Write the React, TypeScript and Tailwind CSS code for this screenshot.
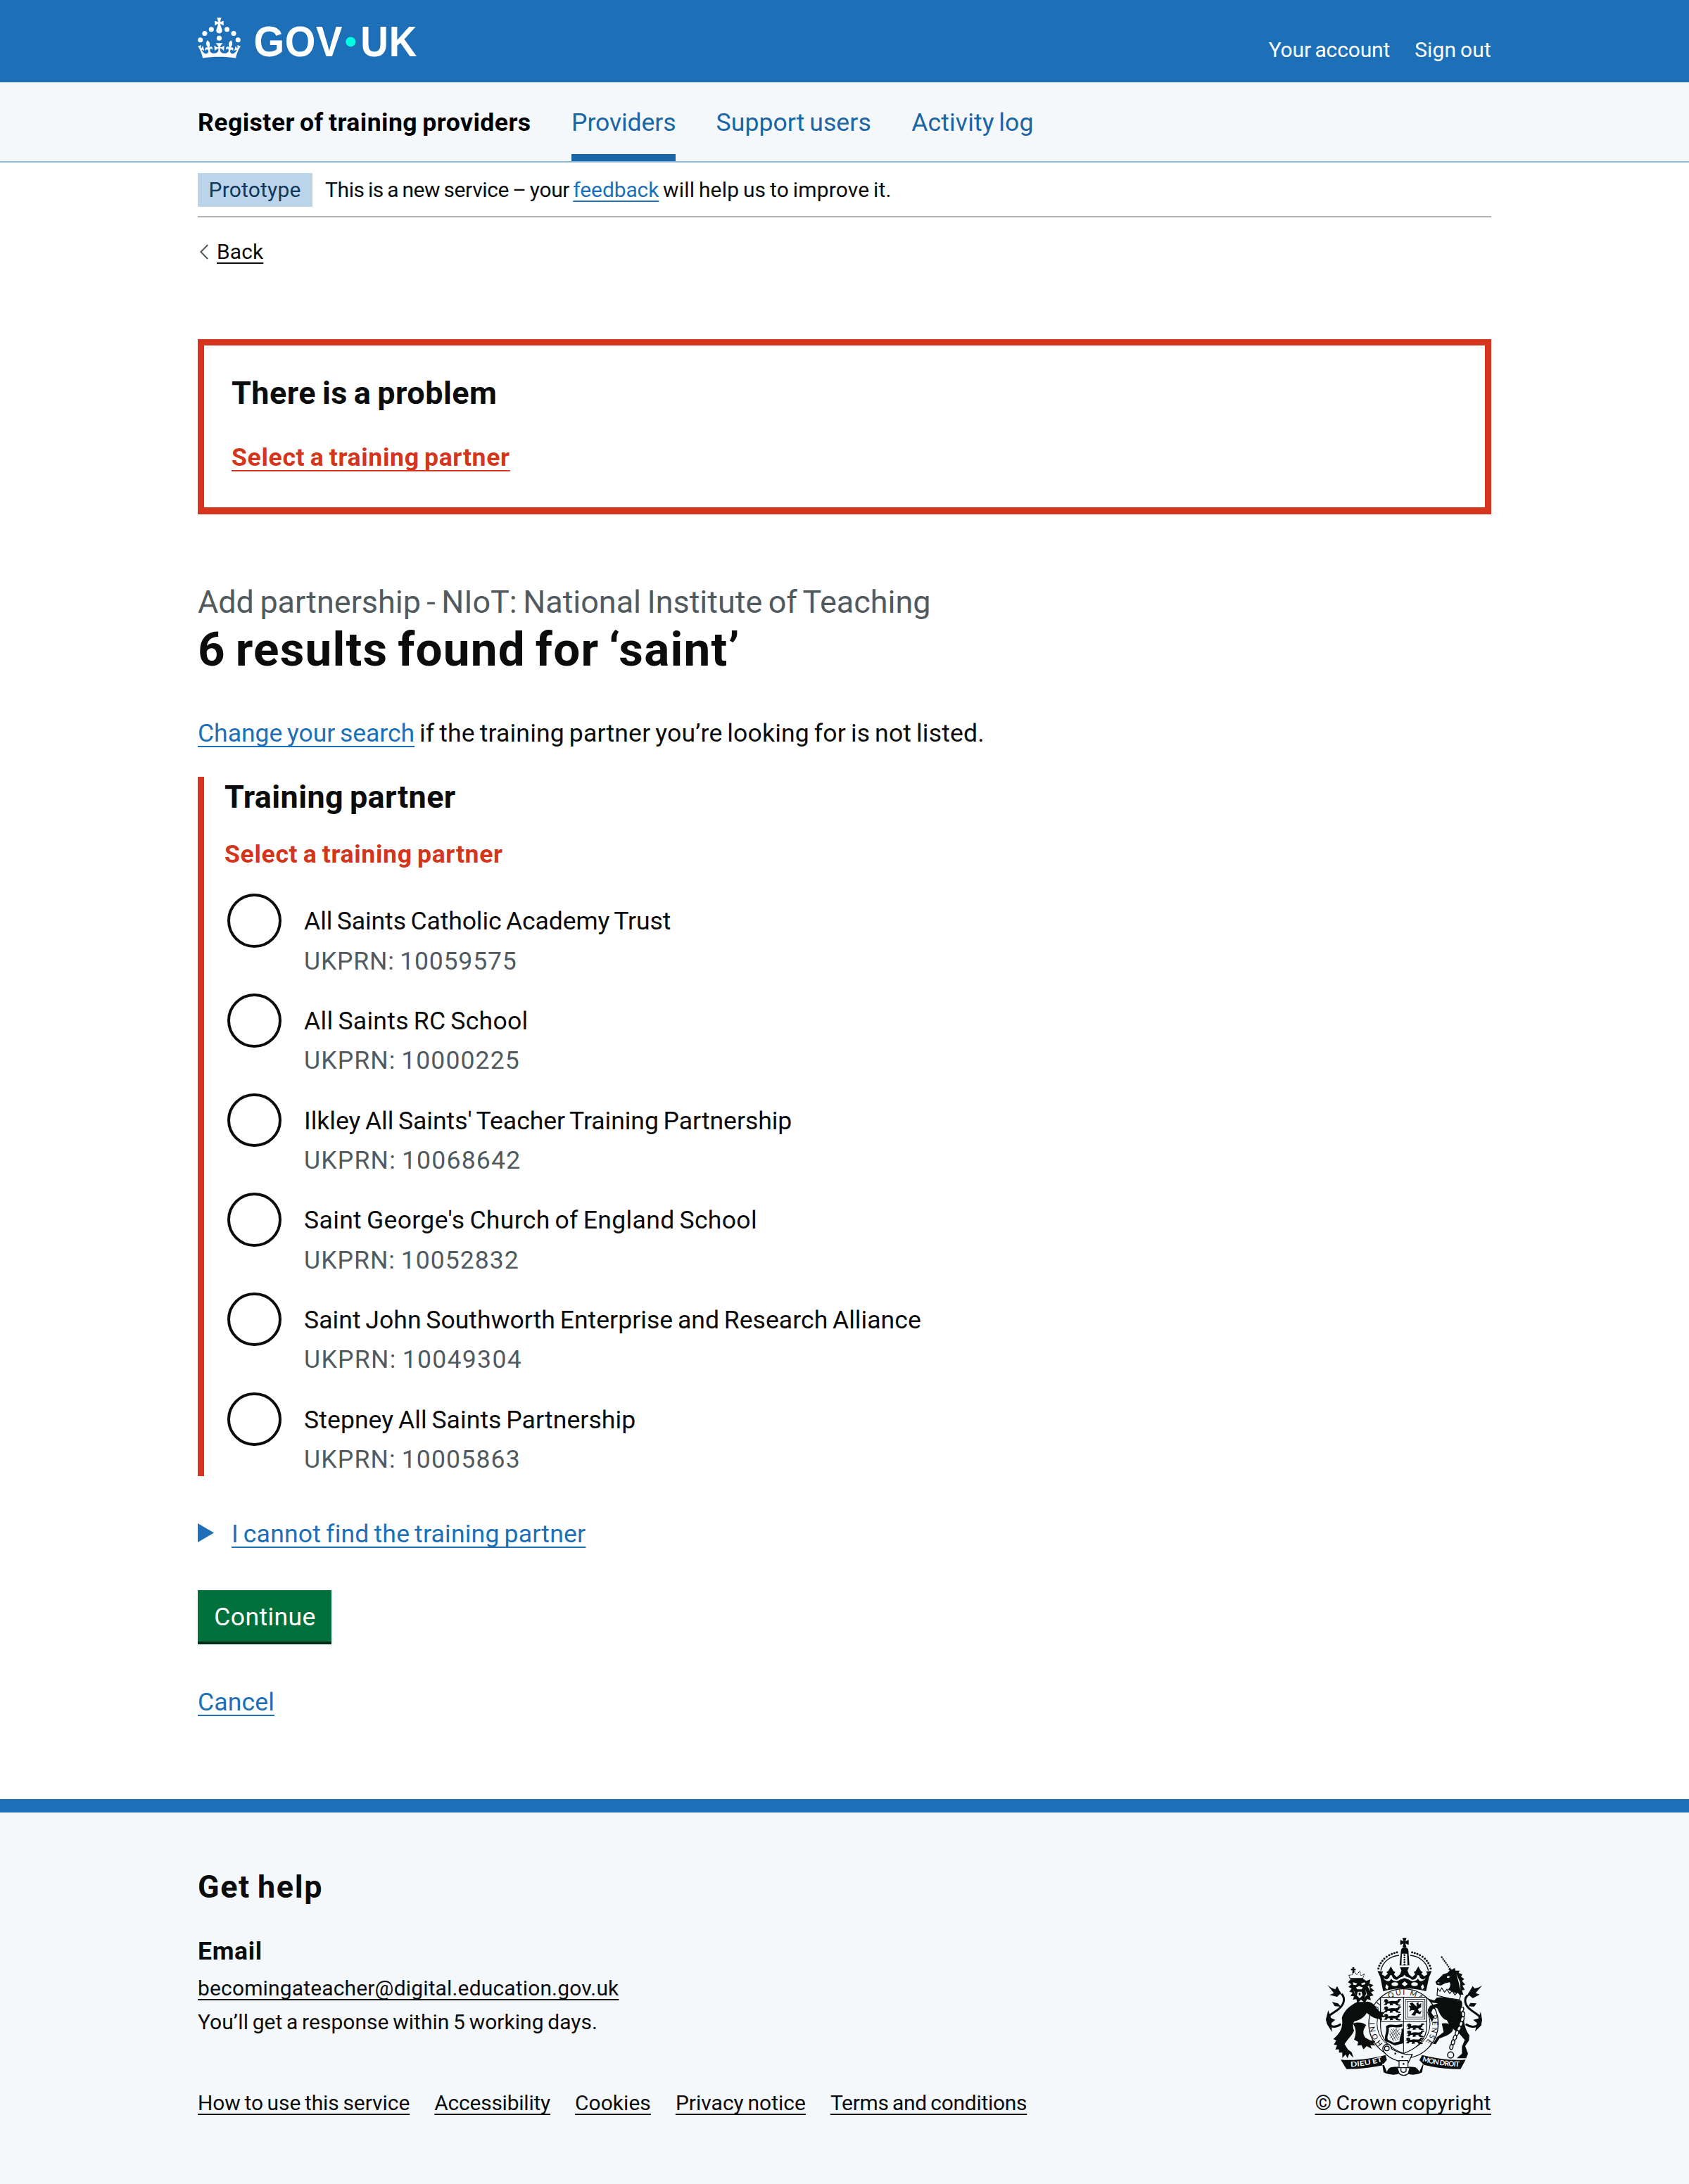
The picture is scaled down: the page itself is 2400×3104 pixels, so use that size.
import React from 'react';

const INK = '#0b0c0c';
const PAPER = '#f4f8fb';

const providers = [
  { name: 'All Saints Catholic Academy Trust', nameTracking: 'tracking-[-0.003em]', ukprn: '10059575', ukprnTracking: 'tracking-[0.023em]' },
  { name: 'All Saints RC School', nameTracking: 'tracking-[0.008em]', ukprn: '10000225', ukprnTracking: 'tracking-[0.031em]' },
  { name: "Ilkley All Saints' Teacher Training Partnership", nameTracking: 'tracking-[-0.001em]', ukprn: '10068642', ukprnTracking: 'tracking-[0.034em]' },
  { name: "Saint George's Church of England School", nameTracking: 'tracking-[0.009em]', ukprn: '10052832', ukprnTracking: 'tracking-[0.029em]' },
  { name: 'Saint John Southworth Enterprise and Research Alliance', nameTracking: 'tracking-[0.001em]', ukprn: '10049304', ukprnTracking: 'tracking-[0.037em]' },
  { name: 'Stepney All Saints Partnership', nameTracking: 'tracking-[0.002em]', ukprn: '10005863', ukprnTracking: 'tracking-[0.033em]' },
];

const footerLinks = [
  { label: 'How to use this service', tracking: 'tracking-[-0.001em]' },
  { label: 'Accessibility', tracking: 'tracking-[-0.007em]' },
  { label: 'Cookies', tracking: 'tracking-[0.002em]' },
  { label: 'Privacy notice', tracking: 'tracking-[0.001em]' },
  { label: 'Terms and conditions', tracking: 'tracking-[-0.009em]' },
];

const small = 'text-[29.95px] leading-[39px] ';
const body = 'text-[35.56px] leading-[48px] ';
const medium = 'text-[44.92px] leading-[57px] ';
const smallLink = 'underline decoration-2 underline-offset-[5px] [text-decoration-skip-ink:none] ';
const bodyLink = 'underline decoration-2 underline-offset-[6px] [text-decoration-skip-ink:none] ';
const container = 'mx-auto w-[1838px] ';

function Logo() {
  return (
    <svg viewBox="0 0 324 60" className="block h-[57.4px] w-[310.2px] overflow-visible" fill="#ffffff" role="img" aria-label="GOV.UK">
      <circle cx="20" cy="17.6" r="3.7" />
      <circle cx="10.2" cy="23.5" r="3.7" />
      <circle cx="3.7" cy="33.2" r="3.7" />
      <circle cx="31.7" cy="30.6" r="3.7" />
      <circle cx="43.3" cy="17.6" r="3.7" />
      <circle cx="53.2" cy="23.5" r="3.7" />
      <circle cx="59.7" cy="33.2" r="3.7" />
      <path d="M33.1,9.8c.2-.1.3-.3.5-.5l4.6,2.4v-6.8l-4.6,1.5c-.1-.2-.3-.3-.5-.5l1.9-5.9h-6.7l1.9,5.9c-.2.1-.3.3-.5.5l-4.6-1.5v6.8l4.6-2.4c.1.2.3.3.5.5l-2.6,8c-.9,2.8,1.2,5.7,4.1,5.7h0c3,0,5.1-2.9,4.1-5.7l-2.6-8ZM37,37.9s-3.4,3.8-4.1,6.1c2.2,0,4.2-.5,6.4-2.8l-.7,8.5c-2-2.8-4.4-4.1-5.7-3.8.1,3.1.5,6.7,5.8,7.2,3.7.3,6.7-1.5,7-3.8.4-2.6-2-4.3-3.7-1.6-1.4-4.5,2.4-6.1,4.9-3.2-1.9-4.5-1.8-7.7,2.4-10.9,3,4,2.6,7.3-1.2,11.1,2.4-1.3,6.2,0,4,4.6-1.2-2.8-3.7-2.2-4.2.2-.3,1.7.7,3.7,3,4.2,1.9.3,4.7-.9,7-5.9-1.3,0-2.4.7-3.9,1.7l2.4-8c.6,2.3,1.4,3.7,2.2,4.5.6-1.6.5-2.8,0-5.3l5,1.8c-2.6,3.6-5.2,8.7-7.3,17.5-7.4-1.1-15.7-1.7-24.5-1.7h0c-8.8,0-17.1.6-24.5,1.7-2.1-8.9-4.7-13.9-7.3-17.5l5-1.8c-.5,2.5-.6,3.7,0,5.3.8-.8,1.6-2.3,2.2-4.5l2.4,8c-1.5-1-2.6-1.7-3.9-1.7,2.3,5,5.2,6.2,7,5.9,2.3-.4,3.3-2.4,3-4.2-.5-2.4-3-3.1-4.2-.2-2.2-4.6,1.6-6,4-4.6-3.7-3.7-4.2-7.1-1.2-11.1,4.2,3.2,4.3,6.4,2.4,10.9,2.5-2.8,6.3-1.3,4.9,3.2-1.8-2.7-4.1-1-3.7,1.6.3,2.3,3.3,4.1,7,3.8,5.4-.5,5.7-4.2,5.8-7.2-1.3-.2-3.7,1-5.7,3.8l-.7-8.5c2.2,2.3,4.2,2.7,6.4,2.8-.7-2.3-4.1-6.1-4.1-6.1h10.6,0Z" />
      <g fontFamily="Liberation Sans, sans-serif" fontWeight="700" fontSize="63.8">
        <text transform="scale(.92 1)" x="90.1 140.4 190.7" y="57.8">GOV</text>
        <text transform="scale(.9 1)" x="268.4 315.4" y="57.8">UK</text>
      </g>
      <circle cx="227" cy="36" r="7.3" fill="#00ffe0" />
    </svg>
  );
}

/* One walking lion of the quarterings, about 74 by 28 units. */
function PassantLion({ x, y }: { x: number; y: number }) {
  return (
    <path
      transform={`translate(${x} ${y})`}
      d="M2 4 L12 0 L20 5 L19 11 L34 8 L52 9 L60 7 L64 0 L74 1 L76 6 L69 6 L67 14 L60 18 L64 23 L74 25 L70 29 L55 27 L49 20 L37 20 L42 26 L26 28 L28 20 L18 19 L12 26 L0 25 L8 18 L6 13 L-2 14 L4 9 Z"
    />
  );
}

function Crest() {
  const pearls = [
    [296, 203], [300, 191], [306, 180], [313, 170], [321, 161], [331, 153], [342, 146], [353, 141], [364, 137], [375, 134],
  ];
  const links = [
    [652, 378, 20], [657, 398, -5], [654, 419, 15], [648, 439, 20], [640, 459, 25], [631, 478, 20], [622, 498, 20], [614, 518, 15], [607, 538, 10],
  ];
  return (
    <svg viewBox="66 66 680 600" className="mr-[10px] block h-[200px] w-[226.7px]" fill={INK} role="img" aria-label="Royal coat of arms">
      {/* crown: cross, orb and arches */}
      <path d="M398 73 H416 L411 87 L425 81 V103 L411 97 L415 111 H399 L403 97 L389 103 V81 L403 87 Z" />
      <path d="M392 128 A16 17 0 1 1 424 128 L428 190 H386 Z" />
      <path d="M396 140 L394 188 H420 L418 140 Z" fill={PAPER} />
      {[146, 156, 166, 176, 186].map((y) => <circle key={y} cx="407" cy={y} r="4" />)}
      {pearls.map(([x, y]) => (
        <g key={x}>
          <circle cx={x} cy={y} r="4.6" />
          <circle cx={815 - x} cy={y} r="4.6" />
        </g>
      ))}
      <path d="M306 212 C316 170 350 150 384 147" fill="none" stroke={INK} strokeWidth="4" />
      <path d="M509 212 C499 170 465 150 431 147" fill="none" stroke={INK} strokeWidth="4" />
      {/* crown: rim with crosses and lilies */}
      <path d="M292 214 L316 216 L310 228 L324 236 L336 226 L330 218 L338 214 L349 194 L360 214 L368 218 L362 228 L374 240 L388 228 L394 212 L388 198 H426 L420 212 L426 228 L440 240 L453 228 L447 218 L455 214 L466 194 L477 214 L485 218 L479 226 L491 236 L505 228 L499 216 L523 214 L512 240 L499 300 C440 284 375 284 316 300 L304 240 Z" />
      <g fill={PAPER}>
        <path d="M318 242 C330 258 342 246 346 232 L353 232 C357 250 376 258 384 244 L400 238 L407 230 L414 238 L431 244 C439 258 458 250 462 232 L469 232 C473 246 485 258 497 242 L494 250 C480 262 468 258 465 246 C456 260 438 260 428 251 L407 244 L387 251 C377 260 359 260 350 246 C347 258 335 262 321 250 Z" />
        <path d="M330 270 l9 10 -5 13 -9 -9Z M486 270 l-9 10 5 13 9 -9Z M408 258 l13 11 -13 11 -13 -11Z" />
        <ellipse cx="366" cy="270" rx="14" ry="8" />
        <ellipse cx="450" cy="270" rx="14" ry="8" />
      </g>

      {/* garter with its motto */}
      <circle cx="403" cy="438" r="148" fill={PAPER} stroke={INK} strokeWidth="4" />
      <circle cx="403" cy="438" r="113" fill="none" stroke={INK} strokeWidth="3" />
      <defs>
        <path id="garter" d="M315 524 A123 123 0 1 1 488 527" />
      </defs>
      <text fontFamily="Lato, sans-serif" fontSize="31" fontWeight="400">
        <textPath href="#garter" textLength="566">HONI SOIT QUI MAL Y PENSE</textPath>
      </text>

      {/* shield */}
      <path d="M305 326 H502 V450 C502 505 460 545 403 565 C346 545 305 505 305 450 Z" fill={PAPER} stroke={INK} strokeWidth="3.5" />
      <path d="M403 326 V562 M305 430 H502" stroke={INK} strokeWidth="3" />
      <PassantLion x={318} y={333} />
      <PassantLion x={318} y={364} />
      <PassantLion x={318} y={396} />
      <PassantLion x={416} y={437} />
      <PassantLion x={416} y={467} />
      <PassantLion x={412} y={497} />
      <rect x="411" y="335" width="83" height="84" fill="none" stroke={INK} strokeWidth="2.5" />
      <rect x="419" y="343" width="67" height="68" fill="none" stroke={INK} strokeWidth="2" />
      <path d="M429 352 L441 348 L450 358 L460 366 L458 352 L466 346 L468 358 L478 350 L478 368 L464 376 L470 388 L480 384 L474 398 L458 392 L452 404 L436 402 L444 392 L450 382 L438 380 L428 386 L432 372 L424 362 L436 362 Z" />
      <path d="M328 450 C345 434 372 452 398 438 L398 451 C372 460 356 448 340 456 C344 480 330 490 336 506 L362 520 L386 514 C386 492 398 478 394 462 L402 458 V522 L366 532 L326 512 C318 494 334 474 328 450 Z" />
      <path d="M346 468 L372 512 M352 462 L380 508 M360 460 L384 500 M370 460 L386 486 M344 482 L362 514 M386 462 L346 500 M390 474 L354 508 M376 458 L344 488" stroke={INK} strokeWidth="2" />

      {/* lion */}
      <path d="M170 232 L178 256 H226 L236 226 L222 234 L216 214 L204 230 L190 210 L184 230 Z" fill={PAPER} stroke={INK} strokeWidth="3" strokeDasharray="5 2" />
      <path d="M185 198 h8 v6 h6 v7 h-6 v12 h-8 v-12 h-6 v-7 h6Z M176 244 H230 V250 H176Z" />
      <path d="M178 250 L166 262 L180 270 L168 282 L182 288 L172 302 L186 306 L177 320 L192 322 L187 336 L202 334 L206 352 L222 336 L238 350 L248 334 L264 338 L260 322 L275 318 L264 304 L279 298 L262 284 L275 274 L258 268 L262 250 L244 256 L232 248 Z" />
      <path d="M188 262 L206 268 L200 274 L188 272Z M238 262 L222 268 L226 274 L240 270Z M200 284 L214 278 L230 284 L224 292 H206Z M208 302 H224 L228 318 L216 330 L204 318Z M190 296 L198 318 L194 302Z M240 292 L248 316 L236 326 L244 312Z M256 276 L262 300 L250 280Z" fill={PAPER} />
      <path d="M212 306 h8 v12 h-8Z" />
      <path d="M206 346 C172 362 148 386 140 414 C146 444 138 468 120 488 L104 504 L116 510 L106 528 L120 530 L112 548 L128 548 L128 562 L142 562 L142 584 L156 570 L164 586 L172 566 L190 584 L182 560 L166 548 L152 526 C166 502 186 486 192 468 C186 450 186 440 194 428 C218 424 238 408 246 392 C262 404 276 416 296 418 L312 426 L310 412 L324 410 L314 400 L324 390 L302 388 L288 372 C276 352 256 340 240 346 Z" />
      <path d="M188 438 C212 428 234 436 244 444 C232 462 226 478 240 498 L262 510 L284 512 L274 522 L284 532 L262 530 L268 546 L246 534 L232 548 L224 530 L206 532 L210 516 L192 506 C202 482 202 462 188 438 Z" />
      <path d="M136 440 C106 462 80 448 78 424 C78 402 104 394 124 378 C150 358 156 332 140 312" fill="none" stroke={INK} strokeWidth="9" />
      <path d="M79 274 L96 286 L112 292 L120 278 L130 298 L146 322 L132 312 L120 324 L88 316 L106 308 Z M82 382 L94 414 L112 422 L96 436 L98 474 L78 442 L72 420 Z M124 352 L98 346 L110 364 L136 366Z" />

      {/* unicorn */}
      <path d="M564 152 L604 208" stroke={INK} strokeWidth="6" strokeDasharray="7 3" />
      <path d="M600 212 L592 204 L610 208 L622 200 L624 212 L642 212 L638 222 L654 228 L648 238 L662 248 L652 256 L666 272 L654 276 L664 294 L652 296 L658 314 L640 316 C624 306 606 300 592 294 C604 282 604 272 600 262 L580 266 L562 276 L544 272 L539 260 L556 244 L572 228 L590 222 Z" />
      <path d="M590 234 l12 4 -6 6 -8 -2Z M628 226 L644 262 L646 296 L638 262Z M548 262 l12 2 -10 3Z" fill={PAPER} />
      <path d="M548 288 L558 300 L566 286 L578 304 L588 292 L600 310 L610 298 L622 316 L634 304 L646 318 L642 336 L596 330 L546 318 Z" fill={PAPER} stroke={INK} strokeWidth="3.5" />
      <path d="M544 328 C572 320 612 334 648 340 C662 356 642 376 650 400 C668 424 656 450 684 488 L682 510 L666 534 L678 566 L670 586 H630 L652 566 L652 536 L664 508 L640 480 C622 468 600 452 588 424 C570 420 556 396 548 374 C536 364 524 376 522 392 L534 410 L524 432 L512 406 L506 380 L516 362 L550 352 L520 348 L504 330 L534 340 Z" />
      <path d="M566 438 C588 434 604 440 610 450 C622 466 606 480 586 490 L556 502 L540 526 L528 524 L546 496 L574 474 Z" />
      <path d="M668 440 C700 462 730 448 732 424 C732 402 706 394 688 378 C662 358 660 332 676 318" fill="none" stroke={INK} strokeWidth="9" />
      <path d="M738 276 L722 284 L706 288 L698 278 L686 298 L668 328 L684 318 L698 330 L728 314 L710 308 Z M732 388 L722 416 L700 422 L716 436 L708 472 L734 446 L738 422 Z M688 350 L714 352 L704 366 L680 364Z" />
      {links.map(([x, y, a]) => (
        <ellipse key={y} cx={x} cy={y} rx="7" ry="11" transform={`rotate(${a} ${x} ${y})`} fill={PAPER} stroke={INK} strokeWidth="4" />
      ))}
      <circle cx="604" cy="572" r="13" fill={PAPER} stroke={INK} strokeWidth="4.5" />

      {/* buckle of the garter */}
      <path d="M322 530 C340 520 352 532 352 546 C380 562 412 572 440 570 L424 604 C386 604 344 588 322 562 C312 550 312 538 322 530 Z" fill={PAPER} stroke={INK} strokeWidth="4" />
      <circle cx="332" cy="544" r="10" fill={PAPER} stroke={INK} strokeWidth="4" />
      <circle cx="368" cy="566" r="4" />
      <circle cx="398" cy="580" r="4" />

      {/* ribbon */}
      <path d="M135 592 C200 598 270 586 326 572 L336 606 L312 610 L318 646 C340 658 368 658 384 652 L380 622 L340 624 L330 612 C280 624 226 632 160 632 Z" />
      <path d="M668 592 C604 598 540 586 482 572 L466 604 L488 612 L482 646 C462 658 436 658 420 652 L424 622 L462 624 L474 610 C524 624 582 632 646 632 Z" />
      <path d="M318 610 L332 644 C340 620 364 620 376 622 L372 596 L334 590Z M486 610 L470 644 C462 620 438 620 428 622 L432 600 L462 586Z" fill={PAPER} />
      <path d="M384 596 H422 V626 H384Z" fill={PAPER} stroke={INK} strokeWidth="3.5" />
      <circle cx="403" cy="610" r="4" />
      <path d="M376 626 H430 L424 650 C412 662 394 662 384 650 Z" fill={PAPER} stroke={INK} strokeWidth="4" />
      <path d="M392 628 V640 C396 648 410 648 414 640 V628" fill="none" stroke={INK} strokeWidth="4" />
      <defs>
        <path id="ribbon-left" d="M178 622 C226 620 272 612 320 598" />
        <path id="ribbon-right" d="M482 598 C530 612 580 620 646 622" />
      </defs>
      <g fontFamily="Lato, sans-serif" fontSize="30" fontWeight="700" fill={PAPER}>
        <text><textPath href="#ribbon-left" textLength="138" lengthAdjust="spacingAndGlyphs">DIEU ET</textPath></text>
        <text><textPath href="#ribbon-right" textLength="162">MON DROIT</textPath></text>
      </g>
    </svg>
  );
}

function Header() {
  return (
    <header>
      <div className="h-[117px] bg-[#1d70b8]">
        <div className={container + 'flex items-start justify-between'}>
          <div className="pt-[25px]"><Logo /></div>
          <nav className={small + 'flex gap-[35px] pt-[51px] text-white'}>
            <a className="tracking-[-0.004em]">Your account</a>
            <a className="tracking-[0.006em]">Sign out</a>
          </nav>
        </div>
      </div>
      <div className="h-[114px] border-b-2 border-[#8eb8dc] bg-[#f4f8fb]">
        <div className={container + body + 'flex h-[112px] items-stretch gap-[57.5px]'}>
          <div className="pt-[33px] font-bold tracking-[0.013em] text-black">Register of training providers</div>
          <nav className="flex gap-[57.5px] text-[#1a65a6]">
            <a className="w-[148px] whitespace-nowrap border-b-10 border-[#1a65a6] pt-[33px] tracking-[-0.003em]">Providers</a>
            <a className="pt-[33px] tracking-[0.002em]">Support users</a>
            <a className="pt-[33px] tracking-[0.003em]">Activity log</a>
          </nav>
        </div>
      </div>
    </header>
  );
}

function PhaseBanner() {
  return (
    <div className={small + 'flex h-[78px] items-start border-b-2 border-[#b1b4b6] pt-[15px]'}>
      <strong className="mr-[18px] h-[48px] w-[163px] bg-[#bbd4ea] pl-[15.5px] pt-[4px] font-normal tracking-[0.008em] text-[#0f385c]">Prototype</strong>
      <span className="whitespace-nowrap pt-[4px]">
        <span className="tracking-[-0.012em]">This is a new service – your </span>
        <a className={smallLink + 'tracking-[-0.003em] text-[#1d70b8]'}>feedback</a>
        <span className="tracking-[0.006em]"> will help us to improve it.</span>
      </span>
    </div>
  );
}

function BackLink() {
  return (
    <div className={small + 'flex items-start pt-[29px]'}>
      <svg viewBox="0 0 12 22" className="ml-[3px] mr-[12px] mt-[9px] h-[22px] w-[12px]" fill="none" stroke="#505a5f" strokeWidth="2">
        <path d="M11.2 1 L1.4 11 L11.2 21" />
      </svg>
      <a className={smallLink + 'tracking-[0.004em]'}>Back</a>
    </div>
  );
}

function ErrorSummary() {
  return (
    <section className="mt-[105px] h-[249px] border-9 border-b-10 border-[#d4351c] px-[39px] pt-[39px]">
      <h2 className={medium + 'font-bold tracking-[0.011em]'}>There is a problem</h2>
      <a className={body + bodyLink + 'mt-[39px] inline-block font-bold tracking-[0.019em] text-[#d4351c]'}>Select a training partner</a>
    </section>
  );
}

function PartnerRadios() {
  return (
    <fieldset className="mt-[38px] border-l-9 border-[#d4351c] pl-[29px]">
      <h2 className={medium + 'font-bold tracking-[0.009em]'}>Training partner</h2>
      <p className={body + 'mt-[29px] font-bold tracking-[0.019em] text-[#d4351c]'}>Select a training partner</p>
      <div className="mt-[32.3px] flex flex-col gap-[22.4px] pl-[4px]">
        {providers.map((p) => (
          <label key={p.ukprn} className="flex h-[119.25px]">
            <span className="h-[76.6px] w-[76.6px] shrink-0 rounded-full border-4 border-[#0b0c0c]" />
            <span className={body + 'block pl-[32.5px] pt-[15px]'}>
              <span className={'block ' + p.nameTracking}>{p.name}</span>
              <span className={'mt-[8.3px] block text-[#505a5f] ' + p.ukprnTracking}>UKPRN: {p.ukprn}</span>
            </span>
          </label>
        ))}
      </div>
    </fieldset>
  );
}

function Footer() {
  return (
    <footer className="mt-[114px] h-[547px] border-t-[19px] border-[#1d70b8] bg-[#f4f8fb]">
      <div className={container + 'flex items-end justify-between pt-[77px]'}>
        <div>
          <h2 className={medium + 'font-bold tracking-[0.036em]'}>Get help</h2>
          <h3 className={body + 'mt-[39px] font-bold tracking-[0.018em]'}>Email</h3>
          <p className={small + 'mt-[9px]'}>
            <a className={smallLink + 'tracking-[0.006em]'}>becomingateacher@digital.education.gov.uk</a>
          </p>
          <p className={small + 'mt-[9px] tracking-[0.002em]'}>You’ll get a response within 5 working days.</p>
          <nav className={small + 'mt-[76px] flex gap-[35px]'}>
            {footerLinks.map((l) => (
              <a key={l.label} className={smallLink + l.tracking}>{l.label}</a>
            ))}
          </nav>
        </div>
        <div className="flex flex-col items-end">
          <Crest />
          <a className={small + smallLink + 'mt-[17px] tracking-[0.012em]'}>© Crown copyright</a>
        </div>
      </div>
    </footer>
  );
}

export default function App() {
  return (
    <div className="h-[3104px] w-[2400px] overflow-hidden bg-white font-['Roboto',sans-serif] text-[#0b0c0c] [&_:not(svg,svg_*)]:[word-spacing:-0.06em]">
      <Header />
      <div className={container}>
        <PhaseBanner />
        <BackLink />
        <main>
          <ErrorSummary />
          <h1 className="mt-[96px]">
            <span className={medium + 'block text-[#505a5f]'}>Add partnership - NIoT: National Institute of Teaching</span>
            <span className="block text-[67.4px] font-bold leading-[77px] tracking-[0.018em]">6 results found for ‘saint’</span>
          </h1>
          <p className={body + 'mt-[57px] tracking-[0.005em]'}>
            <a className={bodyLink + 'tracking-[-0.001em] text-[#1d70b8]'}>Change your search</a> if the training partner you’re looking for is not listed.
          </p>
          <PartnerRadios />
          <div className={body + 'mt-[58px] flex items-start text-[#1d70b8]'}>
            <svg viewBox="0 0 23 27" className="mr-[25px] mt-[9px] h-[27px] w-[23px]" fill="#1d70b8">
              <path d="M0 0 L23 13.5 L0 27 Z" />
            </svg>
            <a className={bodyLink + 'tracking-[0.006em]'}>I cannot find the training partner</a>
          </div>
          <button className={body + 'mt-[56px] block h-[73px] w-[190px] bg-[#00703c] pt-[3px] pl-px text-center tracking-[0.011em] text-white shadow-[0_4px_0_#002d18]'}>Continue</button>
          <p className={body + 'mt-[62px]'}>
            <a className={bodyLink + 'tracking-[0.004em] text-[#1d70b8]'}>Cancel</a>
          </p>
        </main>
      </div>
      <Footer />
    </div>
  );
}
